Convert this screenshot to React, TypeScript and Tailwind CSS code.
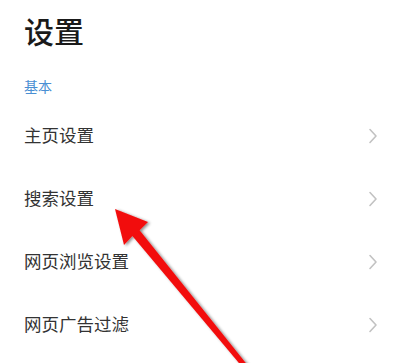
import React from 'react';

const items = ['主页设置', '搜索设置', '网页浏览设置', '网页广告过滤'];

const Chevron = () => (
    <svg width="10" height="16" viewBox="0 0 10 16" fill="none">
        <path d="M2 1.5 L8 8 L2 14.5" stroke="#c2c2c2" strokeWidth="1.6" strokeLinecap="round" strokeLinejoin="round" />
    </svg>
);

const App = () => {
    return (
        <div className="relative w-[400px] h-[363px] overflow-hidden bg-white font-['Noto_Sans_CJK_SC',sans-serif]">
            <div className="h-[60px] px-6 flex items-center text-[30px] font-medium text-[#1a1a1a]">
                设置
            </div>

            <div className="mt-[18px] mb-[10px] h-[16px] px-6 text-[14px] leading-[16px] text-[#4a8fd3]">
                基本
            </div>

            <div>
                {items.map((item) => (
                    <div key={item} className="h-[63px] pl-6 pr-[22px] flex items-center justify-between">
                        <span className="text-[17.5px] text-[#333333]">{item}</span>
                        <Chevron />
                    </div>
                ))}
            </div>

            {/* red arrow drawn over the list */}
            <svg className="absolute inset-0 pointer-events-none" width="400" height="363" viewBox="0 0 400 363">
                <defs>
                    <filter id="shadow" x="-20%" y="-20%" width="140%" height="140%">
                        <feDropShadow dx="2" dy="1" stdDeviation="1.8" floodColor="#000" floodOpacity="0.45" />
                    </filter>
                </defs>
                <polygon
                    points="115,209 148,222 139.6,230.2 253,372 249,375 132.4,236 124,245"
                    fill="#f20d0d"
                    filter="url(#shadow)"
                />
            </svg>
        </div>
    );
};

export default App;
